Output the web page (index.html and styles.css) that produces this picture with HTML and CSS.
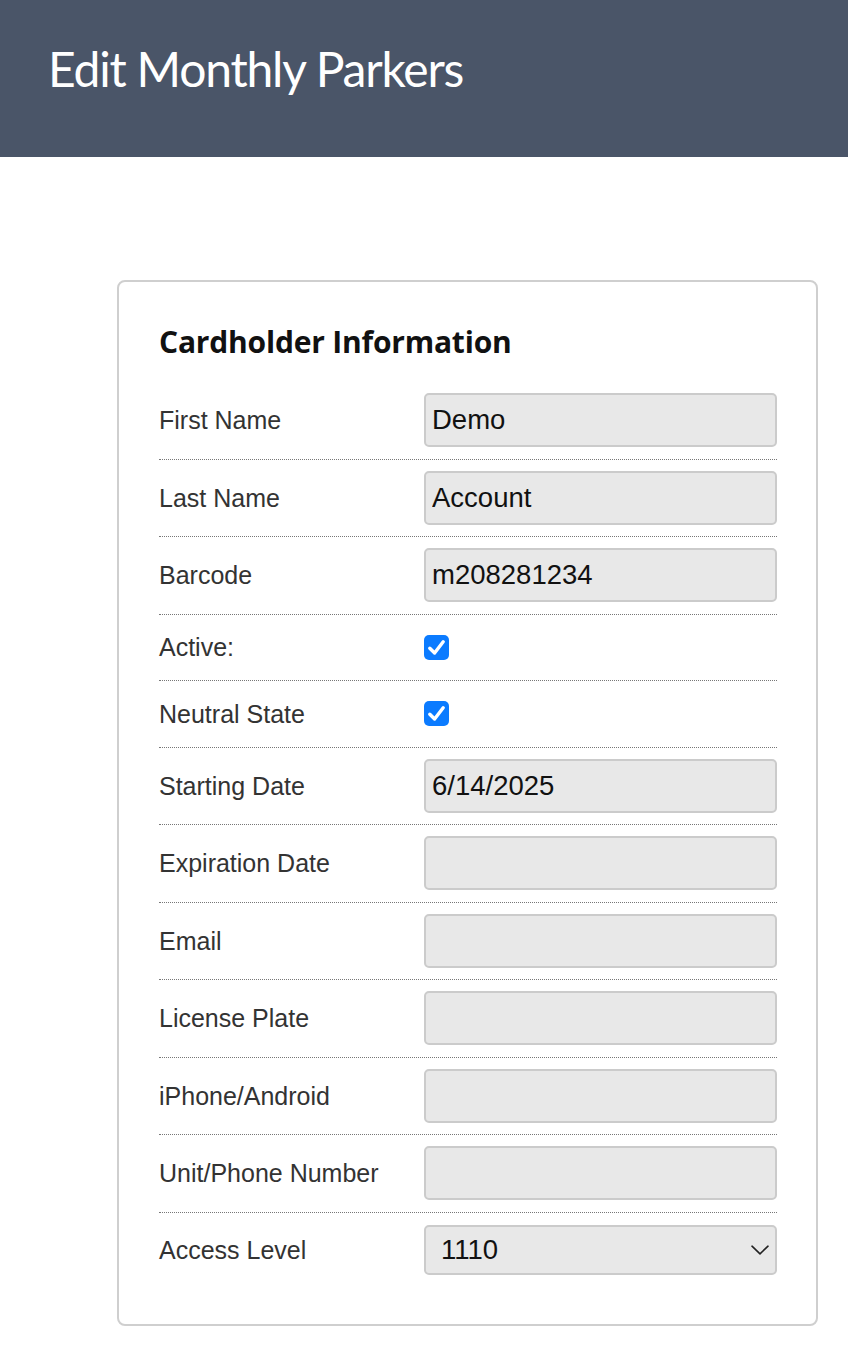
FILE: index.html
```html
<!DOCTYPE html>
<html lang="en">
<head>
<meta charset="utf-8">
<title>Edit Monthly Parkers</title>
<link rel="stylesheet" href="styles.css">
</head>
<body>
<header class="topbar">
  <h1 class="topbar__title">Edit Monthly Parkers</h1>
</header>
<main class="page">
  <section class="card">
    <h2 class="card__title">Cardholder Information</h2>
    <div class="row">
      <label class="row__label">First Name</label>
      <div class="row__field"><input class="text-input" type="text" value="Demo"></div>
    </div>
    <div class="row">
      <label class="row__label">Last Name</label>
      <div class="row__field"><input class="text-input" type="text" value="Account"></div>
    </div>
    <div class="row">
      <label class="row__label">Barcode</label>
      <div class="row__field"><input class="text-input" type="text" value="m208281234"></div>
    </div>
    <div class="row row--check">
      <label class="row__label">Active:</label>
      <div class="row__field">
        <span class="checkbox"><svg viewBox="0 0 25 25" width="25" height="25"><path d="M5.8 13.2 L10.6 18 L19.2 6.8" fill="none" stroke="#fff" stroke-width="3.4" stroke-linecap="round" stroke-linejoin="round"/></svg></span>
      </div>
    </div>
    <div class="row row--check">
      <label class="row__label">Neutral State</label>
      <div class="row__field">
        <span class="checkbox"><svg viewBox="0 0 25 25" width="25" height="25"><path d="M5.8 13.2 L10.6 18 L19.2 6.8" fill="none" stroke="#fff" stroke-width="3.4" stroke-linecap="round" stroke-linejoin="round"/></svg></span>
      </div>
    </div>
    <div class="row">
      <label class="row__label">Starting Date</label>
      <div class="row__field"><input class="text-input" type="text" value="6/14/2025"></div>
    </div>
    <div class="row">
      <label class="row__label">Expiration Date</label>
      <div class="row__field"><input class="text-input" type="text" value=""></div>
    </div>
    <div class="row">
      <label class="row__label">Email</label>
      <div class="row__field"><input class="text-input" type="text" value=""></div>
    </div>
    <div class="row">
      <label class="row__label">License Plate</label>
      <div class="row__field"><input class="text-input" type="text" value=""></div>
    </div>
    <div class="row">
      <label class="row__label">iPhone/Android</label>
      <div class="row__field"><input class="text-input" type="text" value=""></div>
    </div>
    <div class="row">
      <label class="row__label">Unit/Phone Number</label>
      <div class="row__field"><input class="text-input" type="text" value=""></div>
    </div>
    <div class="row row--last">
      <label class="row__label">Access Level</label>
      <div class="row__field">
        <div class="select-wrap">
          <select class="select-input">
            <option>1110</option>
          </select>
          <svg class="select-wrap__chevron" viewBox="0 0 18 10" width="18" height="10"><path d="M1 1.2 L9 8.8 L17 1.2" fill="none" stroke="#222" stroke-width="1.6" stroke-linecap="round" stroke-linejoin="round"/></svg>
        </div>
      </div>
    </div>
  </section>
</main>
</body>
</html>
```

FILE: styles.css
```css
* {
  box-sizing: border-box;
}

html, body {
  margin: 0;
  padding: 0;
  background: #ffffff;
}

body {
  font-family: "Liberation Sans", Arial, sans-serif;
  color: #333333;
}

.topbar {
  height: 157px;
  background: #4a5568;
  padding: 40px 0 0 48px;
}

.topbar__title {
  margin: 0;
  font-family: Lato, "Open Sans", sans-serif;
  font-weight: 400;
  font-size: 48px;
  letter-spacing: -1.2px;
  line-height: 1.2;
  color: #ffffff;
}

.page {
  padding: 123px 30px 40px 117px;
}

.card {
  width: 701px;
  border: 2px solid #cfcfcf;
  border-radius: 8px;
  padding: 40px 39px 38px 40px;
}

.card__title {
  margin: 0 0 20px 0;
  font-family: "Open Sans", Lato, sans-serif;
  font-weight: 700;
  font-size: 30px;
  line-height: 40px;
  letter-spacing: -0.2px;
  color: #111111;
}

.row {
  display: grid;
  grid-template-columns: 265px 1fr;
  align-items: center;
  padding: 11.25px 0;
  border-bottom: 1px dotted #777777;
}

.row--check {
  min-height: 66.5px;
}

.row--last {
  border-bottom: none;
  padding-top: 12px;
}

.row__label {
  font-size: 25px;
  line-height: 30px;
  color: #333333;
}

.row__field {
  display: flex;
  align-items: center;
}

.text-input {
  width: 100%;
  height: 54px;
  margin: 0;
  padding: 0 6px;
  border: 2px solid #cbcbcb;
  border-radius: 5px;
  background: #e8e8e8;
  font-family: "Liberation Sans", Arial, sans-serif;
  font-size: 27.5px;
  color: #111111;
  outline: none;
}

.checkbox {
  display: block;
  width: 25px;
  height: 25px;
  border-radius: 5px;
  background: #0b7bff;
}

.checkbox svg {
  display: block;
}

.select-wrap {
  position: relative;
  width: 100%;
}

.select-input {
  display: block;
  width: 100%;
  height: 50px;
  margin: 0;
  padding: 0 40px 0 15px;
  border: 2px solid #cbcbcb;
  border-radius: 5px;
  background: #e8e8e8;
  -webkit-appearance: none;
  appearance: none;
  font-family: "Liberation Sans", Arial, sans-serif;
  font-size: 27.5px;
  color: #111111;
  outline: none;
}

.select-wrap__chevron {
  position: absolute;
  right: 8px;
  top: 20px;
  pointer-events: none;
}
```
